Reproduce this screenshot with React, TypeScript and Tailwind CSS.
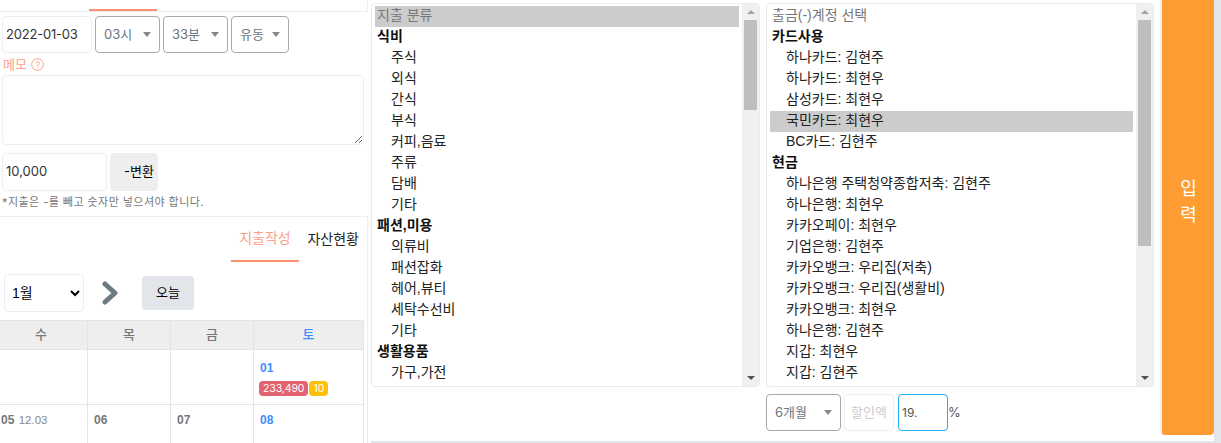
import { ReactNode } from "react";

const poppins = "font-['Inter','Noto_Sans_CJK_KR',sans-serif]";
const listFont = "font-['Liberation_Sans','Noto_Sans_CJK_KR',sans-serif]";

type Row = { label: string; kind: "head" | "group" | "item"; selected?: boolean };

const expenseRows: Row[] = [
  { label: "지출 분류", kind: "head", selected: true },
  { label: "식비", kind: "group" },
  ...["주식", "외식", "간식", "부식", "커피,음료", "주류", "담배", "기타"].map((label) => ({ label, kind: "item" as const })),
  { label: "패션,미용", kind: "group" },
  ...["의류비", "패션잡화", "헤어,뷰티", "세탁수선비", "기타"].map((label) => ({ label, kind: "item" as const })),
  { label: "생활용품", kind: "group" },
  { label: "가구,가전", kind: "item" },
];

const accountRows: Row[] = [
  { label: "출금(-)계정 선택", kind: "head" },
  { label: "카드사용", kind: "group" },
  { label: "하나카드: 김현주", kind: "item" },
  { label: "하나카드: 최현우", kind: "item" },
  { label: "삼성카드: 최현우", kind: "item" },
  { label: "국민카드: 최현우", kind: "item", selected: true },
  { label: "BC카드: 김현주", kind: "item" },
  { label: "현금", kind: "group" },
  ...[
    "하나은행 주택청약종합저축: 김현주",
    "하나은행: 최현우",
    "카카오페이: 최현우",
    "기업은행: 김현주",
    "카카오뱅크: 우리집(저축)",
    "카카오뱅크: 우리집(생활비)",
    "카카오뱅크: 최현우",
    "하나은행: 김현주",
    "지갑: 최현우",
    "지갑: 김현주",
  ].map((label) => ({ label, kind: "item" as const })),
];

function Caret() {
  return <span className="w-0 h-0 border-x-[4px] border-x-transparent border-t-[5px] border-t-[#888]" />;
}

function FakeSelect({ label, width }: { label: string; width: string }) {
  return (
    <div className={`${width} h-[37px] flex items-center justify-between pl-2 pr-2 border border-[#a8a8a8] rounded-[4px] text-[13px] text-[#6c757d] ${poppins}`}>
      <span>{label}</span>
      <Caret />
    </div>
  );
}

function ListBox({ rows, width, thumbH, itemsW }: { rows: Row[]; width: string; thumbH: string; itemsW: string }) {
  return (
    <div className={`${width} h-[384px] border border-[#e8eaed] rounded-[4px] flex overflow-hidden ${listFont}`}>
      <div className={`${itemsW} pt-[2px] pl-[3px] text-[14px] leading-[19px] text-[#222] overflow-hidden`}>
        {rows.map((r, i) => (
          <div
            key={i}
            className={`h-[21px] whitespace-nowrap pl-[2px] ${r.selected ? "bg-[#cccccc]" : ""} ${r.kind === "head" ? "text-[#777]" : ""} ${r.kind === "group" ? "font-bold text-[#111]" : ""}`}
          >
            {r.kind === "item" ? <span className="pl-[14px]">{r.label}</span> : r.label}
          </div>
        ))}
      </div>
      <div className="flex-1" />
      <div className="w-[17px] bg-[#f0f0f0] flex flex-col items-center">
        <div className="h-[16px] flex items-center justify-center">
          <span className="w-0 h-0 border-x-[4px] border-x-transparent border-b-[4px] border-b-[#a3a3a3]" />
        </div>
        <div className={`w-[13px] ${thumbH} bg-[#bebebe]`} />
        <div className="flex-1" />
        <div className="h-[16px] flex items-center justify-center">
          <span className="w-0 h-0 border-x-[4px] border-x-transparent border-t-[4px] border-t-[#505050]" />
        </div>
      </div>
    </div>
  );
}

function DayCell({ children }: { children?: ReactNode }) {
  return <div className="border-r border-b border-[#e2e5e9] pl-[6px] pt-[6px]">{children}</div>;
}

function HeadCell({ children, className = "text-[#777]" }: { children: ReactNode; className?: string }) {
  return (
    <div className={`flex items-center justify-center bg-[#eeeeee] border-r border-b border-t border-[#e2e5e9] text-[13px] font-medium ${className}`}>
      {children}
    </div>
  );
}

export default function App() {
  return (
    <div className={`w-[1221px] h-[443px] overflow-hidden flex bg-white ${listFont}`}>
      {/* left column */}
      <div className="w-[368px] shrink-0 flex flex-col">
        <div className="h-[12px] border-b border-r border-[#eceef2] pl-[89px] flex items-end">
          <span className="w-[68px] h-[2px] bg-[#fd8f73]" />
        </div>

        <div className="flex gap-[3px] pl-[2px] mt-[4px]">
          <div className={`w-[90px] h-[37px] flex items-center pl-[3px] border border-[#eceef2] rounded-[4px] text-[13px] tracking-[-0.2px] text-[#333] ${poppins}`}>2022-01-03</div>
          <FakeSelect label="03시" width="w-[65px]" />
          <FakeSelect label="33분" width="w-[65px]" />
          <FakeSelect label="유동" width="w-[58px]" />
        </div>

        <div className={`flex items-center gap-[4px] pl-[3px] mt-[3px] h-[17px] text-[13px] text-[#fba08a] ${poppins}`}>
          메모
          <svg width="13" height="13" viewBox="0 0 13 13" fill="none" stroke="#fba08a">
            <circle cx="6.5" cy="6.5" r="5.8" />
            <path d="M4.8 5.2a1.7 1.7 0 1 1 2.6 1.4c-.6.4-.9.7-.9 1.4M6.5 9.2v1" />
          </svg>
        </div>

        <textarea readOnly className="block w-[362px] h-[70px] ml-[2px] mt-[2px] border border-[#eceef2] rounded-[4px] outline-none" />

        <div className="flex gap-[3px] pl-[2px] mt-[8px]">
          <div className={`w-[105px] h-[38px] flex items-center pl-[3px] border border-[#eceef2] rounded-[4px] text-[13px] text-[#333] ${poppins}`}>10,000</div>
          <div className={`w-[48px] h-[38px] flex items-center justify-end pr-[4px] bg-[#eeeeee] rounded-[4px] text-[13px] text-black ${poppins}`}>-변환</div>
        </div>

        <p className={`pl-[2px] mt-[3px] h-[16px] text-[11px] leading-[16px] text-[#777] tracking-[0.45px] whitespace-nowrap ${poppins}`}>
          *지출은 -를 빼고 숫자만 넣으셔야 합니다.
        </p>

        <div className="flex-1 mt-[6px] border-t border-r border-[#eceef2] flex flex-col">
          <div className="flex justify-end h-[45px] pr-[8px] text-[14px] whitespace-nowrap">
            <div className="w-[68px] h-[45px] flex items-center justify-center border-b-2 border-[#fd8f73] text-[#fba08a]">지출작성</div>
            <div className="w-[60px] flex items-center justify-end text-[#222]">자산현황</div>
          </div>

          <div className="flex items-center pl-[4px] mt-[12px] h-[38px]">
            <select className="w-[80px] h-[38px] pl-[3px] border border-[#eceef2] rounded-[4px] text-[14px] text-black bg-white">
              <option>1월</option>
            </select>
            <svg width="18" height="24" viewBox="0 0 18 24" fill="none" stroke="#6c7a82" strokeWidth="5" strokeLinecap="round" strokeLinejoin="round" className="ml-[17px] mr-[23px]">
              <path d="M4 3l10 9-10 9" />
            </svg>
            <div className="w-[52px] h-[34px] flex items-center justify-center bg-[#e2e5e9] rounded-[4px] text-[13px] text-black">오늘</div>
          </div>

          <div className="mt-[8px] flex-1 grid grid-cols-[88px_83px_83px_110px] grid-rows-[30px_55px_1fr] w-[364px] overflow-hidden">
            <HeadCell className="text-[#777] pr-[5px]">수</HeadCell>
            <HeadCell>목</HeadCell>
            <HeadCell>금</HeadCell>
            <HeadCell className="text-[#3f8cff]">토</HeadCell>

            <DayCell />
            <DayCell />
            <DayCell />
            <DayCell>
              <div className="text-[12px] font-bold text-[#3f8cff] leading-[18px] mt-[3px]">01</div>
              <div className="flex gap-[1px] -ml-[1px] mt-[4px]">
                <span className={`h-[15px] px-[4px] flex items-center bg-[#e0636f] rounded-[4px] text-[10.5px] tracking-[-0.1px] text-white ${poppins}`}>233,490</span>
                <span className={`h-[15px] px-[4px] flex items-center bg-[#ffc107] rounded-[4px] text-[10.5px] text-white ${poppins}`}>10</span>
              </div>
            </DayCell>

            <div className="border-r border-[#e2e5e9] pl-[1px] pt-[6px] text-[12px] font-bold text-[#777] leading-[18px]">
              05 <span className="font-normal text-[11.5px] text-[#888] ml-[1px]">12.03</span>
            </div>
            <div className="border-r border-[#e2e5e9] pl-[6px] pt-[6px] text-[12px] font-bold text-[#777] leading-[18px]">06</div>
            <div className="border-r border-[#e2e5e9] pl-[6px] pt-[6px] text-[12px] font-bold text-[#777] leading-[18px]">07</div>
            <div className="border-r border-[#e2e5e9] pl-[6px] pt-[6px] text-[12px] font-bold text-[#3f8cff] leading-[18px]">08</div>
          </div>
        </div>
      </div>

      {/* lists and submit */}
      <div className="flex-1 flex flex-col pl-[3px]">
        <div className="h-[441px] flex">
          <div className="w-[789px] flex flex-col">
            <div className="flex gap-[6px] pt-[3px]">
              <ListBox rows={expenseRows} width="w-[389px]" thumbH="h-[90px]" itemsW="w-[367px]" />
              <ListBox rows={accountRows} width="w-[388px]" thumbH="h-[226px]" itemsW="w-[366px]" />
            </div>
            <div className="flex items-center pl-[395px] mt-[7px] h-[37px]">
              <FakeSelect label="6개월" width="w-[75px]" />
              <div className={`ml-[3px] w-[50px] h-[37px] flex items-center justify-center border border-[#eceef2] rounded-[4px] text-[13px] text-[#ccc] ${poppins}`}>할인액</div>
              <div className={`ml-[4px] w-[50px] h-[37px] flex items-center pl-[3px] border border-[#1eb0f5] rounded-[4px] text-[12px] text-[#555] ${poppins}`}>19.</div>
              <span className={`text-[13px] text-[#555] ${poppins}`}>%</span>
            </div>
          </div>
          <div className="w-[54px] shrink-0 h-[435px] border-l-2 border-[#f0f1f3] bg-[#ff9d33] rounded-b-[4px] flex flex-col items-center justify-center pb-[31px] pl-[1px] text-[18px] leading-[26px] text-white">
            <span>입</span>
            <span>력</span>
          </div>
        </div>
        <div className="h-[2px] bg-[#e2e5e9]" />
      </div>

      <div className="w-[7px] shrink-0 bg-[#e2e5e9]" />
    </div>
  );
}
